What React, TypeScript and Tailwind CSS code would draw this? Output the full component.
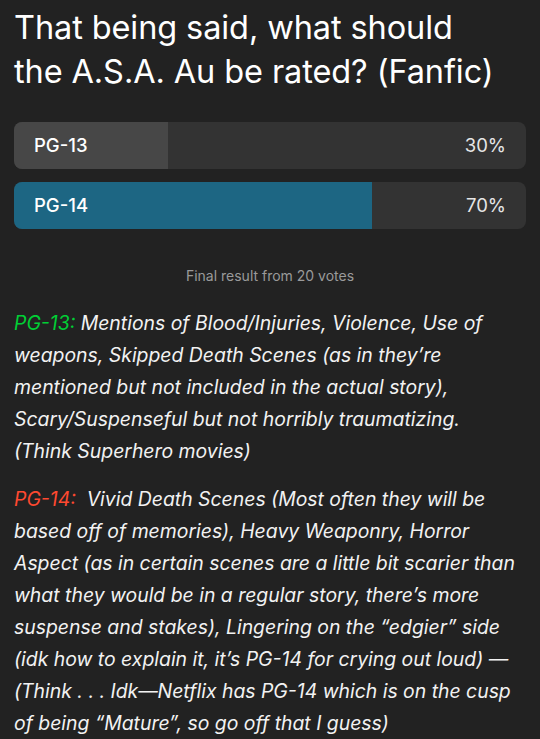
export default function App() {
  const options = [
    { label: "PG-13", pct: 30, fill: "bg-[#474747]" },
    { label: "PG-14", pct: 70, fill: "bg-[#1d6683]" },
  ];

  return (
    <div className="min-h-screen bg-[#222222] px-[14px] pt-[6px] pb-6 text-white font-['Inter','Liberation_Sans',sans-serif]">
      <h1 className="text-[32.5px] leading-[44px] font-normal tracking-[-0.1px]">
        That being said, what should
        <br />
        the A.S.A. Au be rated? (Fanfic)
      </h1>

      <div className="mt-[28px] flex flex-col gap-[13px]">
        {options.map((o) => (
          <div key={o.label} className="relative h-[47px] overflow-hidden rounded-[8px] bg-[#333333]">
            <div className={`absolute inset-y-0 left-0 ${o.fill}`} style={{ width: `${o.pct}%` }} />
            <div className="relative flex h-full items-center justify-between px-[20px] text-[18.5px]">
              <span className="font-medium">{o.label}</span>
              <span className="text-[#e6e6e6]">{o.pct}%</span>
            </div>
          </div>
        ))}
      </div>

      <p className="mt-[36px] text-center text-[14px] text-[#9a9a9a]">Final result from 20 votes</p>

      <div className="mt-[21px] text-[19.4px] leading-[32px] italic text-[#f2f2f2]">
        <p className="pr-[22px]">
          <span className="text-[#00cf35]">PG-13:</span> Mentions of Blood/Injuries, Violence, Use of weapons,
          Skipped Death Scenes (as in they’re mentioned but not included in the actual story),
          Scary/Suspenseful but not horribly traumatizing. (Think Superhero movies)
        </p>
        <p className="mt-[16px]">
          <span className="text-[#ff4930]">PG-14:</span>{"\u00a0 "}Vivid Death Scenes (Most often they will be based off
          of memories), Heavy Weaponry, Horror Aspect (as in certain scenes are a little bit scarier than
          what they would be in a regular story, there’s more suspense and stakes), Lingering on the
          “edgier” side (idk how to explain it, it’s PG-14 for crying out loud) — (Think . . . Idk—Netflix
          has PG-14 which is on the cusp of being “Mature”, so go off that I guess)
        </p>
      </div>
    </div>
  );
}
